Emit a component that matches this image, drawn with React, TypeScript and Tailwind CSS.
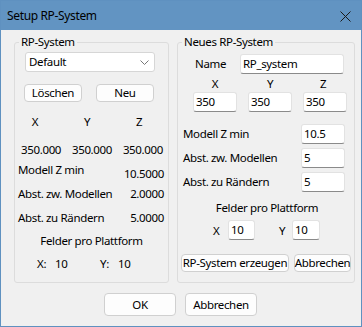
import React from "react";

const inputCls =
  "h-[20px] bg-white border border-[#e2e2e2] border-b-[#8a8a8a] rounded-[3px] pl-[2px] flex items-center leading-none";
const btnCls =
  "h-[18px] bg-[#fdfdfd] border border-[#d0d0d0] rounded-[4px] flex items-center justify-center leading-none whitespace-nowrap";

function Field({ value, w }: { value: string; w: string }) {
  return <div className={`${inputCls} ${w}`}>{value}</div>;
}

export default function App() {
  return (
    <div
      className="w-[362px] h-[327px] bg-[#f0f0f0] border border-[#5f91c0] flex flex-col text-[11.5px] tracking-[-0.35px] text-black whitespace-nowrap"
      style={{ fontFamily: '"Noto Sans", sans-serif' }}
    >
      {/* title bar */}
      <div className="h-[29px] bg-[#6294c2] flex items-center justify-between pl-[6px] pr-[10px]">
        <span className="text-[12px]">Setup RP-System</span>
        <svg width="11" height="11" viewBox="0 0 11 11" className="mt-[1px]">
          <path d="M0.5 0.5 L10.5 10.5 M10.5 0.5 L0.5 10.5" stroke="#1a1a1a" strokeWidth="1" />
        </svg>
      </div>

      {/* body */}
      <div className="flex gap-[8px] pl-[13px] pt-[4px]">
        {/* left group */}
        <fieldset className="w-[152px] border border-[#dcdcdc] rounded-[3px] px-[3px] pb-[10px]">
          <legend className="px-[2px] ml-[1px] leading-[16px]">RP-System</legend>
          <div className="ml-[7px] mt-[2px] w-[130px] h-[20px] bg-white border border-[#d6d6d6] rounded-[3px] flex items-center justify-between pl-[3px] pr-[5px]">
            <span>Default</span>
            <svg width="9" height="5" viewBox="0 0 9 5">
              <path d="M0.5 0.5 L4.5 4.5 L8.5 0.5" stroke="#777" fill="none" strokeWidth="1" />
            </svg>
          </div>
          <div className="flex mt-[12px] ml-[6px] gap-[14px]">
            <div className={`${btnCls} w-[58px]`}>Löschen</div>
            <div className={`${btnCls} w-[58px]`}>Neu</div>
          </div>
          <div className="flex mt-[12px] h-[16px] leading-[16px]">
            <span className="w-[52px] text-center ml-[-9px]">X</span>
            <span className="w-[52px] text-center">Y</span>
            <span className="w-[52px] text-center">Z</span>
          </div>
          <div className="flex mt-[12px] h-[16px] leading-[16px] justify-between pl-[3px] pr-[2px]">
            <span>350.000</span>
            <span>350.000</span>
            <span>350.000</span>
          </div>
          <div className="flex justify-between mt-[4px] h-[20px] pr-[1px]">
            <span className="self-start leading-[16px]">Modell Z min</span>
            <span className="self-end leading-[16px]">10.5000</span>
          </div>
          <div className="flex justify-between mt-[4px] h-[16px] leading-[16px] pr-[1px]">
            <span>Abst. zw. Modellen</span>
            <span>2.0000</span>
          </div>
          <div className="flex justify-between mt-[8px] h-[16px] leading-[16px] pr-[1px]">
            <span>Abst. zu Rändern</span>
            <span>5.0000</span>
          </div>
          <div className="mt-[7px] h-[16px] leading-[16px] text-center">Felder pro Plattform</div>
          <div className="flex mt-[7px] h-[16px] leading-[16px]">
            <span className="ml-[19px] w-[18px]">X:</span>
            <span className="w-[45px]">10</span>
            <span className="w-[18px]">Y:</span>
            <span>10</span>
          </div>
        </fieldset>

        {/* right group */}
        <fieldset className="w-[178px] border border-[#dcdcdc] rounded-[3px] pl-[5px] pr-[3px] pb-[9px]">
          <legend className="px-[2px] ml-[-1px] leading-[16px]">Neues RP-System</legend>
          <div className="flex items-center mt-[4px]">
            <span className="ml-[12px] w-[45px]">Name</span>
            <Field value="RP_system" w="w-[104px]" />
          </div>
          <div className="flex mt-[2px] h-[16px] leading-[16px] ml-[10px]">
            <span className="w-[44px] text-center">X</span>
            <span className="w-[44px] text-center ml-[11px]">Y</span>
            <span className="w-[44px] text-center ml-[9px]">Z</span>
          </div>
          <div className="flex ml-[10px] gap-[11px]">
            <Field value="350" w="w-[44px]" />
            <Field value="350" w="w-[44px]" />
            <Field value="350" w="w-[44px]" />
          </div>
          <div className="flex items-center justify-between mt-[12px] pr-[6px]">
            <span>Modell Z min</span>
            <Field value="10.5" w="w-[44px]" />
          </div>
          <div className="flex items-center justify-between mt-[4px] pr-[6px]">
            <span>Abst. zw. Modellen</span>
            <Field value="5" w="w-[44px]" />
          </div>
          <div className="flex items-center justify-between mt-[4px] pr-[6px]">
            <span>Abst. zu Rändern</span>
            <Field value="5" w="w-[44px]" />
          </div>
          <div className="mt-[8px] h-[16px] leading-[16px] text-center">Felder pro Plattform</div>
          <div className="flex items-center mt-[4px]">
            <span className="ml-[30px] w-[15px] pt-[2px]">X</span>
            <Field value="10" w="w-[27px]" />
            <span className="ml-[24px] w-[13px] pt-[2px]">Y</span>
            <Field value="10" w="w-[28px]" />
          </div>
          <div className="flex mt-[14px] gap-[5px] ml-[-2px]">
            <div className={`${btnCls} w-[108px]`}>RP-System erzeugen</div>
            <div className={`${btnCls} w-[57px]`}>Abbrechen</div>
          </div>
        </fieldset>
      </div>

      {/* dialog buttons */}
      <div className="flex justify-center gap-[9px] mt-[10px] pr-[1px]">
        <div className={`${btnCls} !h-[23px] w-[72px]`}>OK</div>
        <div className={`${btnCls} !h-[23px] w-[72px]`}>Abbrechen</div>
      </div>
    </div>
  );
}
